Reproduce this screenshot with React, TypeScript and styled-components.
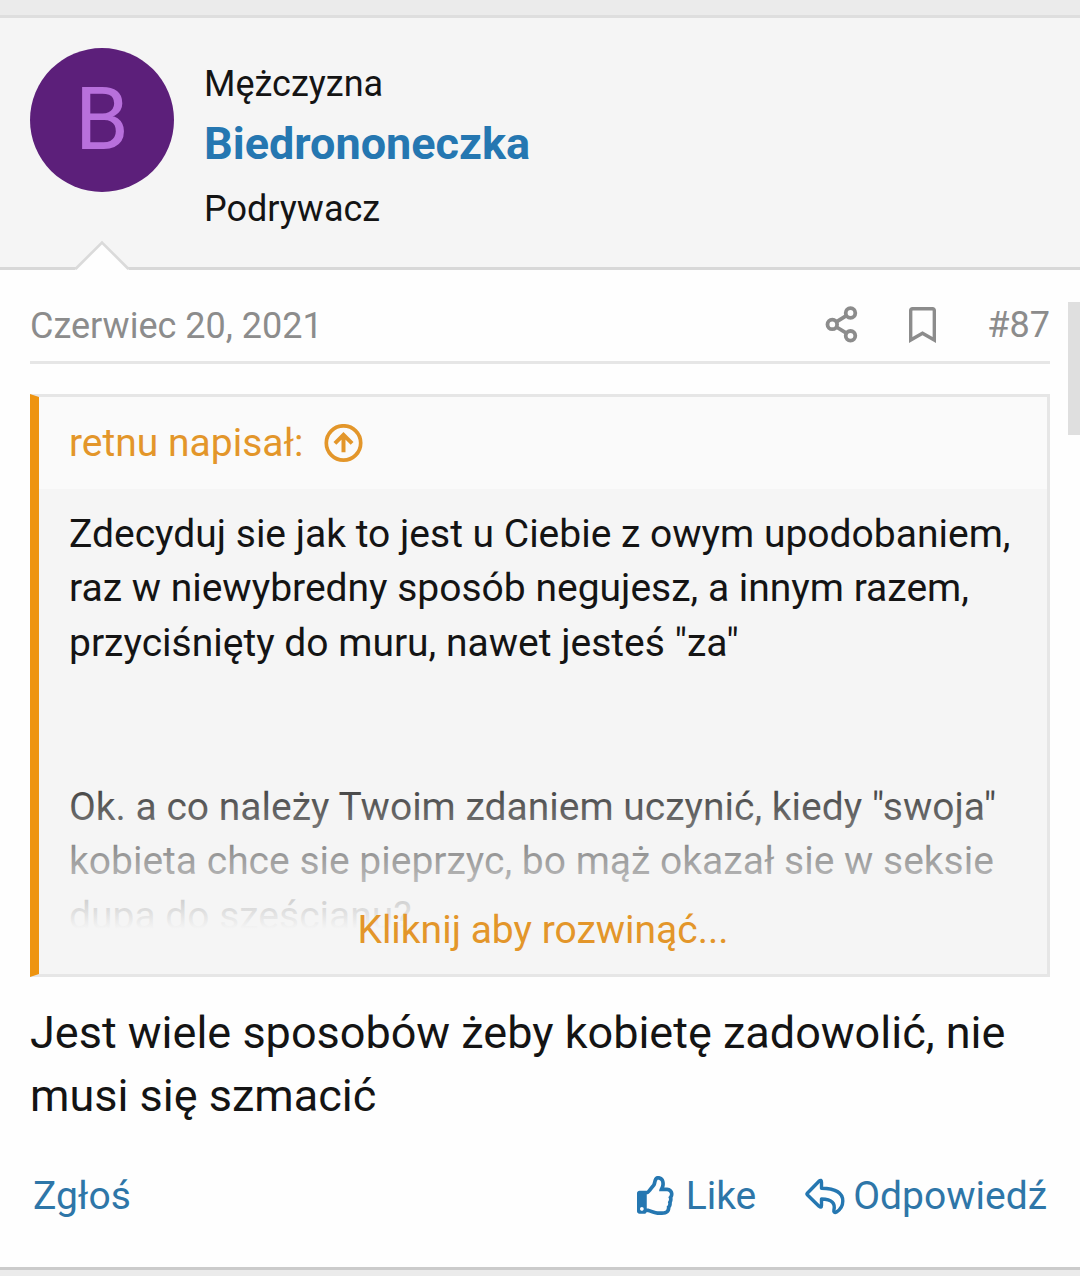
import React from "react";
import styled, { createGlobalStyle } from "styled-components";
import { FaRegBookmark, FaRegThumbsUp } from "react-icons/fa";

const Global = createGlobalStyle`
  body { margin: 0; background: #ebebeb; }
  * { box-sizing: border-box; }
`;

const Page = styled.div`
  width: 1080px;
  height: 1276px;
  overflow: hidden;
  padding-top: 15px;
  background: #ebebeb;
  color: #141414;
  font-family: Roboto, sans-serif;
  font-size: 39px;
  line-height: 1.4;
  position: relative;
`;

const Post = styled.article`
  height: 1255px;
  border-top: 3px solid #dedede;
  border-bottom: 3px solid #cbcbcb;
  background: #fefefe;
`;

const UserHeader = styled.header`
  position: relative;
  display: flex;
  gap: 30px;
  height: 252px;
  padding: 30px 30px 0;
  background: #f5f5f5;
  border-bottom: 3px solid #d8d8d8;
`;

const Avatar = styled.div`
  width: 144px;
  height: 144px;
  border-radius: 50%;
  background: #5c1f7a;
  color: #b870dc;
  font-size: 86.4px;
  line-height: 144px;
  text-align: center;
`;

const Identity = styled.div`
  display: flex;
  flex-direction: column;
  padding-top: 11px;
`;

const UserMeta = styled.div`
  font-size: 36px;
  line-height: 50px;
`;

const UserName = styled.a`
  font-size: 45px;
  font-weight: 700;
  line-height: 63px;
  margin: 3px 0 9px;
  color: #2577b1;
`;

const Pointer = styled.svg`
  position: absolute;
  left: 72px;
  top: 222px;
`;

const Content = styled.div`
  display: flex;
  flex-direction: column;
  padding: 30px 30px 0;
`;

const Attribution = styled.div`
  display: flex;
  align-items: center;
  height: 64px;
  padding-bottom: 10px;
  border-bottom: 3px solid #e6e6e6;
  color: #8c8c8c;
  font-size: 36px;
`;

const PostDate = styled.span`
  padding-top: 2px;
`;

const PostTools = styled.div`
  display: flex;
  align-items: center;
  margin-left: auto;
`;

const PostNumber = styled.span`
  margin-left: 51px;
`;

const BookmarkIcon = styled(FaRegBookmark)`
  width: 27px;
  height: 36px;
  margin-left: 50px;
`;

const Quote = styled.blockquote`
  position: relative;
  height: 583px;
  margin: 30px 0 0;
  border: 3px solid #e6e6e6;
  border-left: 9px solid #ee9410;
  background: #f5f5f5;
  overflow: hidden;
`;

const QuoteTitle = styled.div`
  display: flex;
  align-items: center;
  gap: 21px;
  height: 92px;
  padding: 0 30px;
  background: #fafafa;
  color: #e3962a;
`;

const QuoteAuthor = styled.span`
  padding-top: 1px;
`;

const QuoteBody = styled.div`
  height: 450px;
  padding: 17.5px 0 0 30px;
  overflow: hidden;
  line-height: 54.7px;
  white-space: nowrap;
`;

const QuoteLine = styled.div``;

const QuoteGap = styled.div`
  height: 109px;
`;

const ExpandLink = styled.a`
  position: absolute;
  left: 0;
  right: 0;
  bottom: 0;
  height: 225px;
  padding-top: 154px;
  text-align: center;
  color: #e3962a;
  background: linear-gradient(to bottom, rgba(245, 245, 245, 0) 0%, #f5f5f5 80%);
`;

const Message = styled.div`
  margin-top: 24px;
  font-size: 45px;
  line-height: 63px;
`;

const Actions = styled.footer`
  display: flex;
  align-items: center;
  margin-top: 42px;
  padding: 0 3px;
  color: #2e76a8;
`;

const Action = styled.a<{ $gap?: number }>`
  display: flex;
  align-items: center;
  gap: ${(p) => p.$gap ?? 10}px;
`;

const ActionGroup = styled.div`
  display: flex;
  gap: 49px;
  margin-left: auto;
`;

const ThumbIcon = styled(FaRegThumbsUp)`
  width: 39px;
  height: 39px;
  margin-bottom: 1px;
  color: #2577b1;
`;

const Scrollbar = styled.div`
  position: absolute;
  right: 0;
  top: 302px;
  width: 12px;
  height: 133px;
  background: #dfdfdf;
`;

export default function App() {
  return (
    <Page>
      <Global />
      <Post>
        <UserHeader>
          <Avatar>B</Avatar>
          <Identity>
            <UserMeta>Mężczyzna</UserMeta>
            <UserName>Biedrononeczka</UserName>
            <UserMeta>Podrywacz</UserMeta>
          </Identity>
          <Pointer width="60" height="30" viewBox="0 0 60 30">
            <path d="M3 30 L30 3 L57 30Z" fill="#fefefe" />
            <path d="M3.5 29 L30 2.5 L56.5 29" fill="none" stroke="#dadada" strokeWidth="2.6" />
          </Pointer>
        </UserHeader>
        <Content>
          <Attribution>
            <PostDate>Czerwiec 20, 2021</PostDate>
            <PostTools>
              <svg width="34" height="38" viewBox="825 305 34 38" fill="none" stroke="#8c8c8c" strokeWidth="3.8">
                <circle cx="850.5" cy="312" r="4.8" />
                <circle cx="832.3" cy="323.4" r="4.8" />
                <circle cx="850.5" cy="334.8" r="4.8" />
                <path d="M846.4 314.6 L836.4 320.8 M836.4 326 L846.4 332.2" />
              </svg>
              <BookmarkIcon />
              <PostNumber>#87</PostNumber>
            </PostTools>
          </Attribution>
          <Quote>
            <QuoteTitle>
              <QuoteAuthor>retnu napisał:</QuoteAuthor>
              <svg width="39" height="39" viewBox="0 1 39 39" fill="none" stroke="#e3962a" strokeWidth="3.7">
                <circle cx="19.5" cy="20" r="17.2" />
                <path d="M19.5 29.2 V12 M10.9 20.4 L19.5 11.8 L28.1 20.4" strokeWidth="4" />
              </svg>
            </QuoteTitle>
            <QuoteBody>
              <QuoteLine>Zdecyduj sie jak to jest u Ciebie z owym upodobaniem,</QuoteLine>
              <QuoteLine>raz w niewybredny sposób negujesz, a innym razem,</QuoteLine>
              <QuoteLine>przyciśnięty do muru, nawet jesteś "za"</QuoteLine>
              <QuoteGap />
              <QuoteLine>Ok. a co należy Twoim zdaniem uczynić, kiedy "swoja"</QuoteLine>
              <QuoteLine>kobieta chce sie pieprzyc, bo mąż okazał sie w seksie</QuoteLine>
              <QuoteLine>dupa do sześcianu?</QuoteLine>
            </QuoteBody>
            <ExpandLink>Kliknij aby rozwinąć...</ExpandLink>
          </Quote>
          <Message>
            Jest wiele sposobów żeby kobietę zadowolić, nie
            <br />
            musi się szmacić
          </Message>
          <Actions>
            <Action>Zgłoś</Action>
            <ActionGroup>
              <Action>
                <ThumbIcon />
                <span>Like</span>
              </Action>
              <Action $gap={8}>
                <svg width="40" height="39" viewBox="0 1 40 39" fill="none" stroke="#2577b1" strokeWidth="3.4" strokeLinejoin="round">
                  <path d="M2.3 17.2 L14 5.2 Q16.5 3.2 16.5 6.2 V12.2 C29 12.4 37.8 15.4 37.8 25 C37.8 30 35.5 33.5 31.5 36 C29.7 37 28.4 36 28.9 34 C30.4 27.5 27.5 23.3 16.5 23 V29.5 Q16.5 32.3 14 30.2 L2.3 18.8 Q1.5 18 2.3 17.2Z" />
                </svg>
                <span>Odpowiedź</span>
              </Action>
            </ActionGroup>
          </Actions>
        </Content>
      </Post>
      <Scrollbar />
    </Page>
  );
}
